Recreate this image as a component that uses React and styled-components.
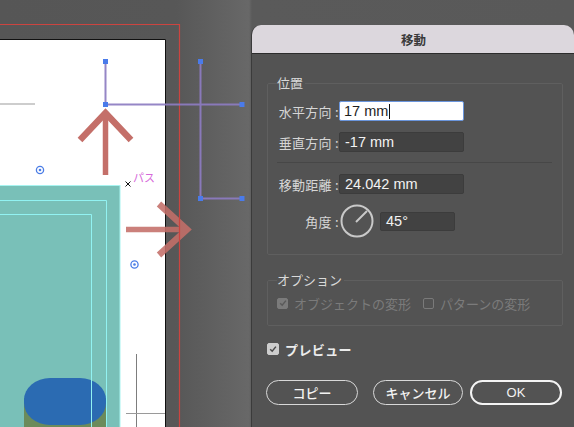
import React from "react";
import styled, { createGlobalStyle } from "styled-components";

const Global = createGlobalStyle`
  html, body { margin: 0; padding: 0; }
  body {
    width: 574px; height: 427px; overflow: hidden;
    font-family: "Noto Sans CJK JP", "Noto Sans", sans-serif;
  }
`;

const Page = styled.div`
  width: 574px;
  height: 427px;
  display: flex;
  overflow: hidden;
  background: linear-gradient(90deg, #565656 0px, #575757 175px, #686868 249px, #5a5a5a 252px, #595959 100%);
`;

const CanvasArea = styled.svg`
  flex: 0 0 251px;
  height: 427px;
  display: block;
`;

const Dialog = styled.div`
  flex: 0 0 323px;
  margin-top: 25px;
  height: 402px;
  box-sizing: border-box;
  background: #535353;
  border-left: 1px solid #3b3b3b;
  border-radius: 10px 10px 0 0;
  overflow: hidden;
  display: flex;
  flex-direction: column;
`;

const TitleBar = styled.div`
  height: 28px;
  flex: 0 0 28px;
  background: #dcd7dd;
  border-bottom: 1px solid #2c2c2c;
  display: flex;
  align-items: center;
  justify-content: center;
  font-size: 12.5px;
  font-weight: 700;
  color: #3a3a3a;
  padding-left: 1px;
`;

const Body = styled.div`
  padding: 0 11px 0 15px;
  display: flex;
  flex-direction: column;
`;

const Group = styled.fieldset`
  margin: ${(p) => p.$top}px 0 0 0;
  min-width: 0;
  border: 1px solid #5f5f5f;
  border-radius: 2px;
  padding: ${(p) => p.$pt}px 10px ${(p) => p.$pb}px 9px;
  display: flex;
  flex-direction: column;
`;

const Legend = styled.legend`
  padding: 0 2px 0 0;
  font-size: 13px;
  line-height: 16px;
  color: #d9d9d9;
`;

const Row = styled.div`
  display: flex;
  align-items: center;
  height: ${(p) => p.$h || 20}px;
  margin-top: ${(p) => p.$mt || 0}px;
`;

const Label = styled.div`
  width: 62px;
  flex: 0 0 62px;
  text-align: right;
  font-size: 13px;
  color: #d6d6d6;
  white-space: nowrap;
  letter-spacing: 0.3px;
`;

const Input = styled.div`
  box-sizing: border-box;
  width: ${(p) => p.$w}px;
  height: ${(p) => p.$h || 20}px;
  margin-left: ${(p) => p.$ml || 0}px;
  border-radius: 2px;
  background: ${(p) => (p.$active ? "#ffffff" : "#424242")};
  border: ${(p) => (p.$active ? "1.5px solid #6a95dc" : "1px solid #3c3c3c")};
  color: ${(p) => (p.$active ? "#1e1e1e" : "#f2f2f2")};
  font-family: "Liberation Sans", "Noto Sans CJK JP", sans-serif;
  font-size: 14.5px;
  display: flex;
  align-items: center;
  padding-left: ${(p) => (p.$active ? 4 : 5)}px;
`;

const Caret = styled.span`
  display: inline-block;
  width: 0;
  height: 15px;
  border-left: 1px solid #111;
  margin-left: 1px;
`;

const Divider = styled.div`
  height: 1px;
  background: #474747;
  margin-top: 10px;
`;

const Dial = styled.svg`
  flex: 0 0 34px;
  margin-left: 1px;
  display: block;
`;

const CheckRow = styled.div`
  display: flex;
  align-items: center;
  height: 16px;
  margin-top: ${(p) => p.$mt || 0}px;
`;

const Box = styled.span`
  box-sizing: border-box;
  width: ${(p) => p.$size || 11}px;
  height: ${(p) => p.$size || 11}px;
  border-radius: 2px;
  flex: 0 0 auto;
  margin-left: ${(p) => p.$ml || 0}px;
  background: ${(p) => (p.$checked ? p.$fill : "transparent")};
  border: 1px solid ${(p) => (p.$checked ? p.$fill : "#7a7a7a")};
  display: flex;
  align-items: center;
  justify-content: center;
`;

const CheckText = styled.span`
  font-size: 13px;
  margin-left: ${(p) => p.$ml || 6}px;
  color: ${(p) => (p.$disabled ? "#7b7b7b" : "#ececec")};
  font-weight: ${(p) => (p.$bold ? 700 : 400)};
  letter-spacing: ${(p) => (p.$bold ? 0.4 : 0)}px;
  white-space: nowrap;
`;

const Buttons = styled.div`
  display: flex;
  margin-top: 23px;
  margin-left: -1px;
`;

const Button = styled.div`
  box-sizing: border-box;
  width: ${(p) => p.$w}px;
  height: 25px;
  margin-left: ${(p) => p.$ml || 0}px;
  border-radius: 13px;
  border: ${(p) => (p.$primary ? "2px solid #f4f4f4" : "1px solid #d8d8d8")};
  display: flex;
  align-items: center;
  justify-content: center;
  color: #f2f2f2;
  font-size: 13px;
  font-weight: 500;
  font-family: ${(p) => (p.$latin ? '"Liberation Sans", sans-serif' : '"Noto Sans CJK JP", sans-serif')};
`;

const Check = ({ color }) => (
  <svg width="8" height="8" viewBox="0 0 8 8">
    <path d="M1.2 4.2 L3.2 6.2 L6.9 1.6" fill="none" stroke={color} strokeWidth="1.5" />
  </svg>
);

const Target = ({ x, y }) => (
  <g>
    <circle cx={x} cy={y} r="3.6" fill="none" stroke="#4b7de6" strokeWidth="1.3" />
    <circle cx={x} cy={y} r="1.3" fill="#4b7de6" />
  </g>
);

const Anchor = ({ x, y }) => <rect x={x - 2.5} y={y - 2.5} width="5" height="5" fill="#4a7bea" />;

function Canvas() {
  return (
    <CanvasArea viewBox="0 0 251 427">
      {/* artboard */}
      <rect x="0" y="39.5" width="165.5" height="400" fill="#ffffff" />
      <path d="M0 39.5 H165.5 V427" fill="none" stroke="#111" strokeWidth="1" />
      {/* teal block */}
      <rect x="-1" y="185.5" width="121" height="260" fill="#79c0b8" stroke="#a8f4f0" strokeWidth="1" />
      <path d="M0 200.5 H106.5 V427" fill="none" stroke="#92f2f2" strokeWidth="1" />
      <path d="M0 214.5 H91.5 V427" fill="none" stroke="#92f2f2" strokeWidth="1" />
      {/* pill */}
      <rect x="24" y="398" width="82" height="40" fill="#6b8b5b" />
      <rect x="24" y="378" width="82" height="47" rx="26" ry="22" fill="#2b6bb2" />
      <line x1="91.5" y1="378" x2="91.5" y2="427" stroke="#92f2f2" strokeWidth="1" />
      {/* grey guide */}
      <line x1="0" y1="104" x2="35" y2="104" stroke="#bdbdbd" strokeWidth="1.3" />
      {/* crop mark */}
      <line x1="136.5" y1="354" x2="136.5" y2="427" stroke="#7d7d7d" strokeWidth="1" />
      <line x1="126" y1="413.5" x2="165" y2="413.5" stroke="#9a9a9a" strokeWidth="1" />
      {/* targets */}
      <Target x={40} y={170} />
      <Target x={134.5} y={264.5} />
      {/* path label */}
      <g stroke="#111" strokeWidth="1">
        <line x1="125.5" y1="181.5" x2="130.5" y2="186.5" />
        <line x1="130.5" y1="181.5" x2="125.5" y2="186.5" />
      </g>
      <rect x="127" y="183" width="2" height="2" fill="#111" />
      <text x="133" y="182" fontSize="11" fill="#d667d9" fontFamily='"Noto Sans CJK JP", sans-serif'>パス</text>
      {/* arrows */}
      <g stroke="#c46f69" fill="none" strokeLinejoin="miter">
        <line x1="105.5" y1="113" x2="105.5" y2="175" strokeWidth="5.5" />
        <polyline points="80,140 105.5,113 131,140" strokeWidth="6.5" />
      </g>
      <g stroke="#c46f69" fill="none" opacity="0.88">
        <line x1="126" y1="229.5" x2="186" y2="229.5" strokeWidth="5.5" />
        <polyline points="159,204 187,229.5 159,255" strokeWidth="6.5" />
      </g>
      {/* bleed */}
      <path d="M0 24.5 H179.5 V427" fill="none" stroke="#cc4440" strokeWidth="1.2" />
      {/* selected paths */}
      <g stroke="#8d7cc2" strokeWidth="2" fill="none" opacity="0.92">
        <path d="M105.5 61.5 V104.5 H242" />
        <path d="M200.5 61.5 V198.5 H242" />
      </g>
      <Anchor x={105.5} y={61.5} />
      <Anchor x={105.5} y={104.5} />
      <Anchor x={200.5} y={61.5} />
      <Anchor x={242} y={104.5} />
      <Anchor x={200.5} y={198.5} />
      <Anchor x={242} y={198.5} />
    </CanvasArea>
  );
}

export default function App() {
  return (
    <>
      <Global />
      <Page>
        <Canvas />
        <Dialog>
          <TitleBar>移動</TitleBar>
          <Body>
            <Group $top={21} $pt={10} $pb={16}>
              <Legend>位置</Legend>
              <Row>
                <Label>水平方向 :</Label>
                <Input $w={125} $active>
                  17 mm<Caret />
                </Input>
              </Row>
              <Row $mt={11}>
                <Label>垂直方向 :</Label>
                <Input $w={125}>-17 mm</Input>
              </Row>
              <Divider />
              <Row $mt={11}>
                <Label>移動距離 :</Label>
                <Input $w={125}>24.042 mm</Input>
              </Row>
              <Row $mt={10} $h={34}>
                <Label>角度 :</Label>
                <Dial width="34" height="34" viewBox="0 0 34 34">
                  <circle cx="17" cy="17" r="15.5" fill="none" stroke="#c9c9c9" strokeWidth="2" />
                  <line x1="16" y1="18" x2="27" y2="7" stroke="#c9c9c9" strokeWidth="2" />
                </Dial>
                <Input $w={75} $h={19} $ml={6}>45°</Input>
              </Row>
            </Group>
            <Group $top={17} $pt={7} $pb={14}>
              <Legend>オプション</Legend>
              <CheckRow>
                <Box $checked $fill="#7b7b7b">
                  <Check color="#5a5a5a" />
                </Box>
                <CheckText $disabled>オブジェクトの変形</CheckText>
                <Box $ml={12} />
                <CheckText $disabled>パターンの変形</CheckText>
              </CheckRow>
            </Group>
            <CheckRow $mt={15}>
              <Box $checked $fill="#cdcdcd" $size={12}>
                <Check color="#4a4a4a" />
              </Box>
              <CheckText $bold $ml={6}>プレビュー</CheckText>
            </CheckRow>
            <Buttons>
              <Button $w={92}>コピー</Button>
              <Button $w={90} $ml={15}>キャンセル</Button>
              <Button $w={92} $ml={7} $primary $latin>OK</Button>
            </Buttons>
          </Body>
        </Dialog>
      </Page>
    </>
  );
}
